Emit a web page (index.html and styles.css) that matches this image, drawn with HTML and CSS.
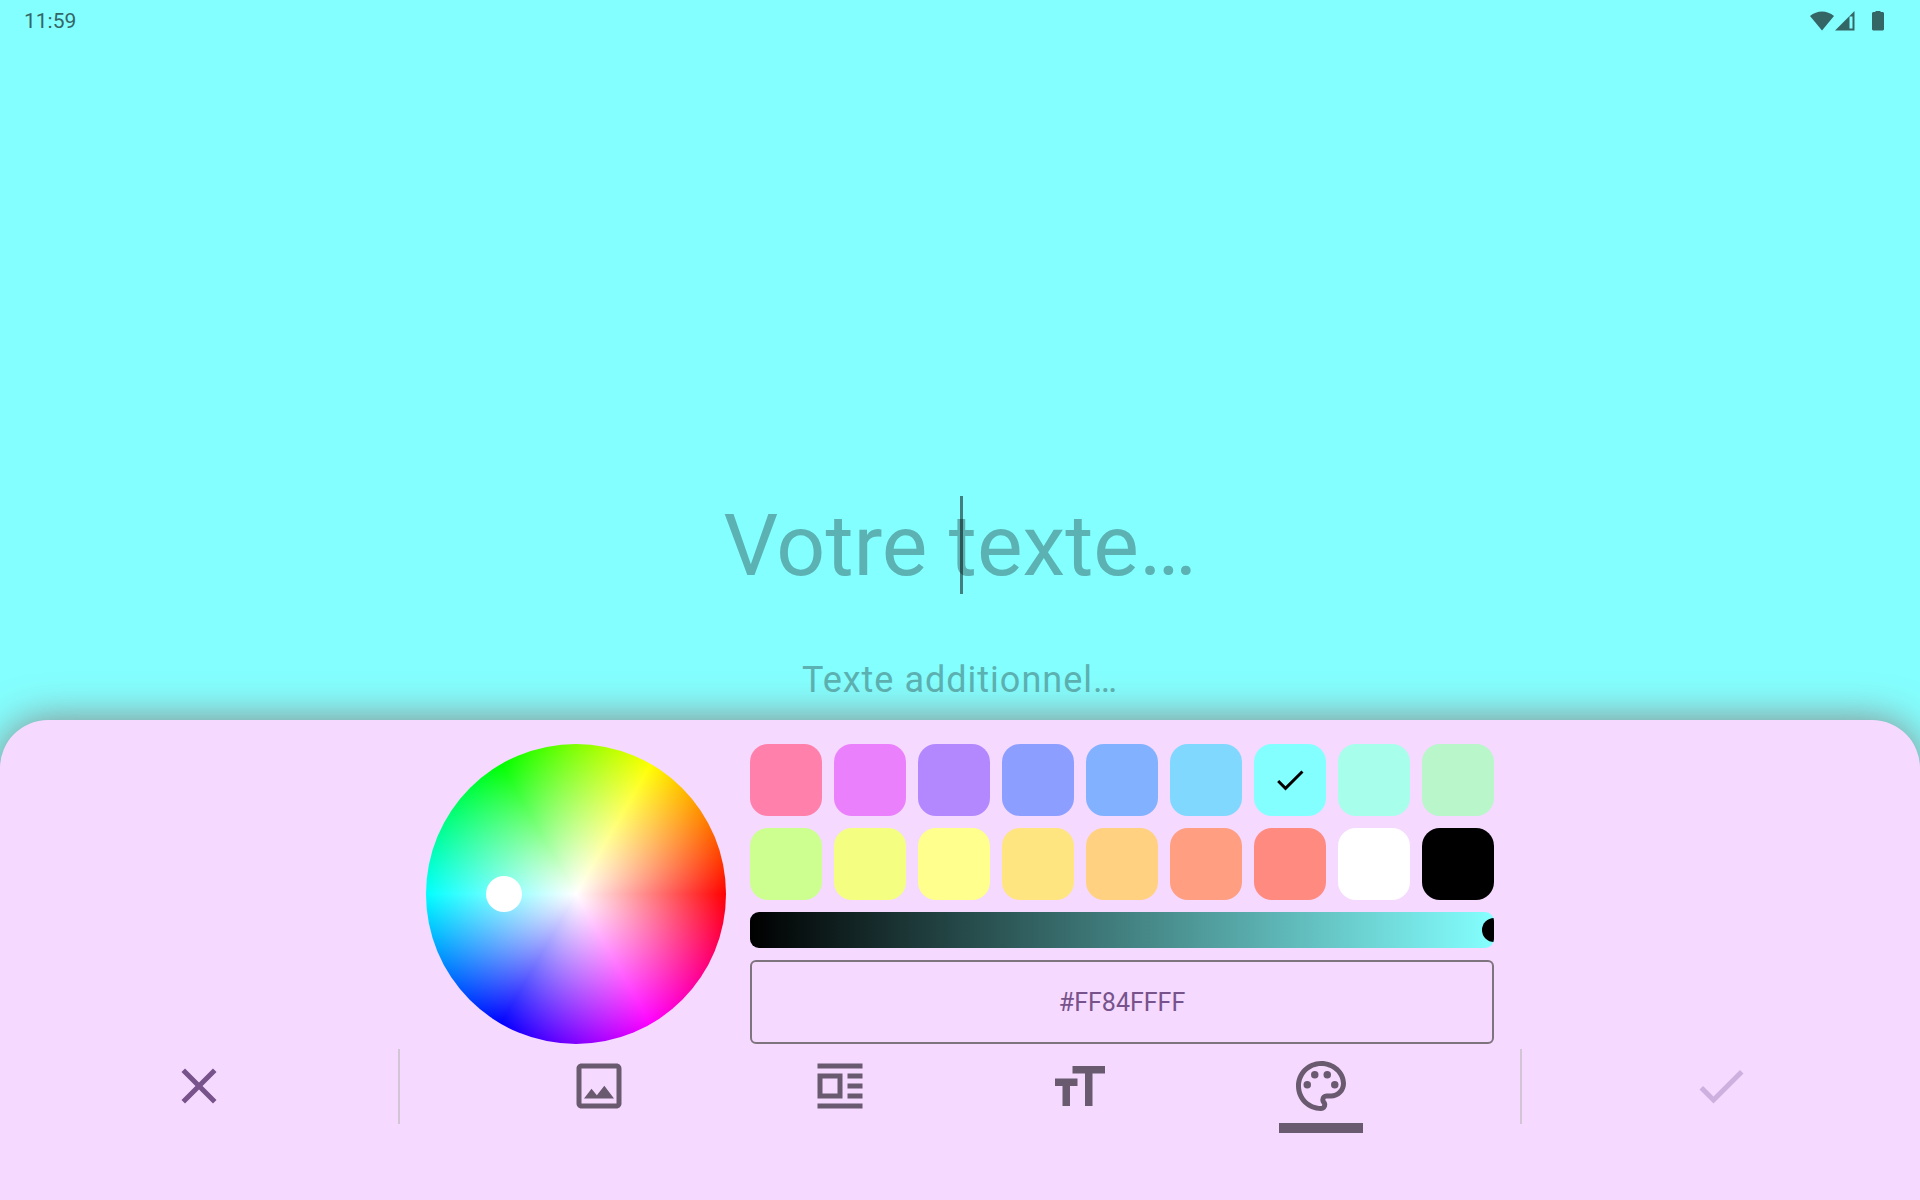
FILE: index.html
```html
<!DOCTYPE html>
<html lang="fr">
<head>
<meta charset="utf-8">
<meta name="viewport" content="width=device-width, initial-scale=1">
<title>Fond et couleur du texte</title>
<link rel="stylesheet" href="styles.css">
</head>
<body>
<header class="status">
  <time class="clock">11:59</time>
  <div class="status-icons">
    <svg class="wifi" width="24" height="20" viewBox="0 0 24 20" aria-hidden="true"><path d="M0 5C7-1 17-1 24 5L12 19.500z"/></svg>
    <svg class="signal" width="20" height="20" viewBox="0 0 20 20" aria-hidden="true"><path fill-rule="evenodd" d="M19.500 0v19.500H0zM14.500 5.500V17.500H17.500V5.500z"/></svg>
    <svg class="battery" width="12" height="20" viewBox="0 0 12 20" aria-hidden="true"><path d="M3.500 0h5v1H11l1 1v16.500l-1 1H1l-1-1V2l1-1h2.500z"/></svg>
  </div>
</header>
<main class="stage">
  <div class="title-field">
    <input class="title-input" type="text" placeholder="Votre texte…" aria-label="Votre texte">
    <span class="caret"></span>
  </div>
  <input class="subtitle-input" type="text" placeholder="Texte additionnel…" aria-label="Texte additionnel">
</main>
<section class="sheet">
  <div class="picker">
    <div class="wheel"><span class="wheel-thumb"></span></div>
    <div class="controls">
      <div class="swatches">
        <input class="swatch pink" type="radio" name="color" aria-label="Rose">
        <input class="swatch magenta" type="radio" name="color" aria-label="Magenta">
        <input class="swatch violet" type="radio" name="color" aria-label="Violet">
        <input class="swatch indigo" type="radio" name="color" aria-label="Indigo">
        <input class="swatch blue" type="radio" name="color" aria-label="Bleu">
        <input class="swatch sky" type="radio" name="color" aria-label="Bleu ciel">
        <label class="swatch-box">
          <input class="swatch cyan" type="radio" name="color" aria-label="Cyan" checked>
          <svg class="swatch-check" width="36" height="36" viewBox="0 0 24 24" aria-hidden="true"><path d="M9 16.170 4.830 12l-1.420 1.410L9 19 21 7l-1.410-1.410z"/></svg>
        </label>
        <input class="swatch teal" type="radio" name="color" aria-label="Turquoise">
        <input class="swatch green" type="radio" name="color" aria-label="Vert">
        <input class="swatch lightgreen" type="radio" name="color" aria-label="Vert clair">
        <input class="swatch lime" type="radio" name="color" aria-label="Citron vert">
        <input class="swatch yellow" type="radio" name="color" aria-label="Jaune">
        <input class="swatch amber" type="radio" name="color" aria-label="Ambre">
        <input class="swatch orange" type="radio" name="color" aria-label="Orange">
        <input class="swatch deeporange" type="radio" name="color" aria-label="Orange foncé">
        <input class="swatch red" type="radio" name="color" aria-label="Rouge">
        <input class="swatch white" type="radio" name="color" aria-label="Blanc">
        <input class="swatch black" type="radio" name="color" aria-label="Noir">
      </div>
      <div class="brightness"><input class="brightness-range" type="range" min="0" max="100" value="100" aria-label="Luminosité"></div>
      <input class="hex" type="text" value="#FF84FFFF" aria-label="Code couleur">
    </div>
  </div>
  <nav class="toolbar">
    <button class="action close" type="button" aria-label="Fermer">
      <svg class="icon" viewBox="0 0 24 24"><path d="M19 6.410 17.590 5 12 10.590 6.410 5 5 6.410 10.590 12 5 17.590 6.410 19 12 13.410 17.590 19 19 17.590 13.410 12z"/></svg>
    </button>
    <span class="divider"></span>
    <div class="tabs">
      <button class="tab" type="button" aria-label="Image">
        <svg class="icon" viewBox="0 0 24 24"><path d="M19 5v14H5V5h14m0-2H5c-1.100 0-2 .9-2 2v14c0 1.100.9 2 2 2h14c1.100 0 2-.9 2-2V5c0-1.100-.9-2-2-2zm-4.860 8.860-3 3.870L9 13.140 6 17h12z"/></svg>
      </button>
      <button class="tab" type="button" aria-label="Mise en page">
        <svg class="icon" viewBox="0 0 24 24"><path fill-rule="evenodd" d="M3 3h18v2H3zM3 19h18v2H3zM3 7h10v10H3zM5 9v6h6V9zM15 7h6v2h-6zM15 11h6v2h-6zM15 15h6v2h-6z"/></svg>
      </button>
      <button class="tab" type="button" aria-label="Taille du texte">
        <svg class="icon" viewBox="0 0 24 24"><path d="M14 20V7H9V4h13v3h-5v13zM5 20v-8H2V9h9v3H8v8z"/></svg>
      </button>
      <button class="tab selected" type="button" aria-label="Couleur">
        <svg class="icon" viewBox="0 0 24 24"><path d="M12 22C6.490 22 2 17.510 2 12S6.490 2 12 2s10 4.040 10 9c0 3.310-2.690 6-6 6h-1.770c-.28 0-.5.22-.5.5 0 .12.050.23.130.33.410.47.640 1.060.640 1.670A2.500 2.500 0 0 1 12 22zm0-18c-4.410 0-8 3.590-8 8s3.590 8 8 8c.28 0 .5-.22.5-.5a.54.54 0 0 0-.14-.35c-.41-.46-.63-1.050-.63-1.650a2.500 2.500 0 0 1 2.500-2.500H16c2.210 0 4-1.790 4-4 0-3.860-3.590-7-8-7z"/><circle cx="6.500" cy="11.500" r="1.500"/><circle cx="9.500" cy="7.500" r="1.500"/><circle cx="14.500" cy="7.500" r="1.500"/><circle cx="17.500" cy="11.500" r="1.500"/></svg>
      </button>
    </div>
    <span class="divider"></span>
    <button class="action confirm" type="button" aria-label="Valider" disabled>
      <svg class="icon" viewBox="0 0 24 24"><path d="M9 16.170 4.830 12l-1.420 1.410L9 19 21 7l-1.410-1.410z"/></svg>
    </button>
  </nav>
</section>
</body>
</html>
```

FILE: styles.css
```css
* {
  box-sizing: border-box;
}

body {
  margin: 0;
  min-height: 100vh;
  display: flex;
  flex-direction: column;
  background: #84ffff;
  font-family: Roboto, "Liberation Sans", sans-serif;
  overflow-x: hidden;
}

input,
button {
  margin: 0;
  padding: 0;
  border: 0;
  background: none;
  font: inherit;
  color: inherit;
  outline: none;
}

svg {
  display: block;
  fill: currentColor;
}

/* Status bar */
.status {
  display: flex;
  align-items: center;
  justify-content: space-between;
  height: 42px;
  padding: 0 36px 0 24px;
  color: #356666;
}

.clock {
  font-size: 21px;
  line-height: 24px;
}

.status-icons {
  display: flex;
  align-items: center;
}

.signal {
  margin: 0 17px 0 1px;
}

/* Text being edited */
.stage {
  flex: 1;
  display: flex;
  flex-direction: column;
  justify-content: flex-end;
  gap: 62px;
  padding-bottom: 16px;
}

.title-field {
  position: relative;
  height: 98px;
}

.title-input,
.subtitle-input {
  display: block;
  width: 100%;
  text-align: center;
}

.title-input {
  height: 100px;
  font-size: 86px;
  line-height: 100px;
}

.subtitle-input {
  height: 48px;
  font-size: 36px;
  line-height: 48px;
  letter-spacing: 1px;
}

.title-input::placeholder,
.subtitle-input::placeholder {
  color: #5cb2b2;
  opacity: 1;
}

.caret {
  position: absolute;
  top: 0;
  left: 50%;
  width: 3px;
  height: 100%;
  background: rgba(0, 0, 0, 0.5);
}

/* Bottom sheet */
.sheet {
  position: relative;
  min-height: 480px;
  padding-top: 24px;
  border-radius: 48px 48px 0 0;
  background: #f5d9ff;
  box-shadow: 0 0 40px rgba(140, 100, 100, 0.8);
}

.picker {
  display: flex;
  justify-content: center;
  gap: 24px;
}

.wheel {
  position: relative;
  width: 300px;
  height: 300px;
  border-radius: 50%;
  background:
    radial-gradient(closest-side, #fff, rgba(255, 255, 255, 0)),
    conic-gradient(from 90deg, #f00, #f0f, #00f, #0ff, #0f0, #ff0, #f00);
}

.wheel-thumb {
  position: absolute;
  left: 20%;
  top: 44%;
  width: 36px;
  height: 36px;
  border-radius: 50%;
  background: #fff;
}

.controls {
  display: flex;
  flex-direction: column;
  gap: 12px;
}

.swatches {
  display: grid;
  grid-template-columns: repeat(9, 72px);
  gap: 12px;
}

.swatch {
  appearance: none;
  display: block;
  width: 72px;
  height: 72px;
  border-radius: 18px;
}

.swatch-box {
  display: grid;
  place-items: center;
}

.swatch-box > * {
  grid-area: 1 / 1;
}

.swatch-check {
  color: #000;
}

.pink { background: #ff80ab; }
.magenta { background: #ea80fc; }
.violet { background: #b388ff; }
.indigo { background: #8c9eff; }
.blue { background: #82b1ff; }
.sky { background: #80d8ff; }
.cyan { background: #84ffff; }
.teal { background: #a7ffeb; }
.green { background: #b9f6ca; }
.lightgreen { background: #ccff90; }
.lime { background: #f4ff81; }
.yellow { background: #ffff8d; }
.amber { background: #ffe57f; }
.orange { background: #ffd180; }
.deeporange { background: #ff9e80; }
.red { background: #ff8a80; }
.white { background: #fff; }
.black { background: #000; }

.brightness {
  height: 36px;
  border-radius: 9px;
  background: linear-gradient(90deg, #000, #84ffff);
  overflow: hidden;
}

.brightness-range {
  appearance: none;
  display: block;
  width: calc(100% + 12px);
  height: 36px;
}

.brightness-range::-webkit-slider-thumb {
  appearance: none;
  width: 24px;
  height: 24px;
  border-radius: 50%;
  background: #000;
}

.hex {
  height: 84px;
  border: 2px solid #7e747d;
  border-radius: 6px;
  color: #77528b;
  font-size: 25px;
  text-align: center;
}

/* Toolbar */
.toolbar {
  display: grid;
  grid-template-columns: 398px 2px 1fr 2px 398px;
  padding-top: 5px;
}

.icon {
  width: 60px;
  height: 60px;
}

.action {
  display: grid;
  justify-items: center;
  align-content: start;
  height: 75px;
  padding-top: 7px;
}

.close {
  color: #77528b;
}

.confirm {
  color: #cdb0dd;
}

.divider {
  height: 75px;
  background: #d2c5d5;
}

.tabs {
  display: flex;
  justify-content: space-evenly;
  color: #695a6f;
}

.tab {
  display: grid;
  justify-items: center;
  align-content: start;
  width: 84px;
  height: 84px;
  padding-top: 7px;
}

.selected {
  border-bottom: 10px solid #695a6f;
}
```
